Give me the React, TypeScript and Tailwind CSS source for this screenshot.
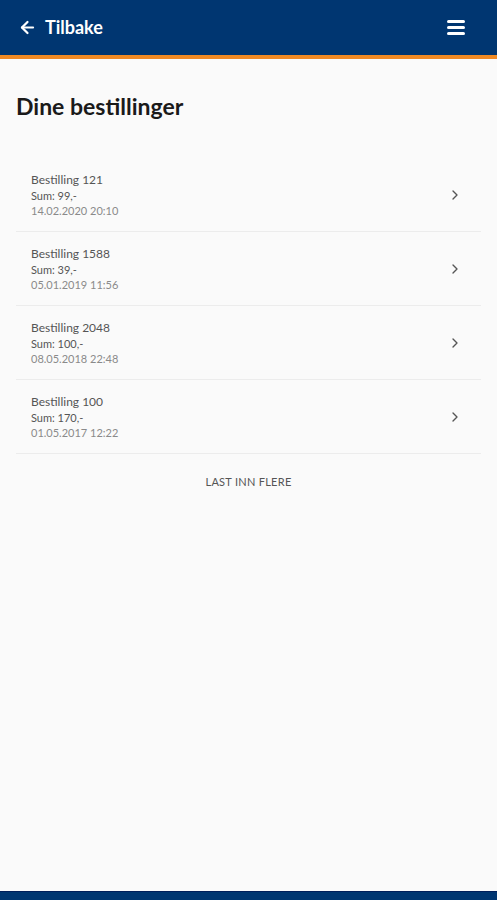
import { ArrowLeft, ChevronRight } from "lucide-react";

const orders = [
	{ id: 121, sum: "99,-", date: "14.02.2020 20:10" },
	{ id: 1588, sum: "39,-", date: "05.01.2019 11:56" },
	{ id: 2048, sum: "100,-", date: "08.05.2018 22:48" },
	{ id: 100, sum: "170,-", date: "01.05.2017 12:22" },
];

function OrderRow({ id, sum, date }: { id: number; sum: string; date: string }) {
	return (
		<div className="flex items-center justify-between h-[74px] pl-[15px] pr-[18px] border-b border-[#ececec]">
			<div className="flex flex-col">
				<span className="text-[12px] leading-[16px] text-[#555]">
					Bestilling {id}
				</span>
				<span className="text-[11px] leading-[15px] text-[#555]">
					Sum: {sum}
				</span>
				<span className="text-[11px] leading-[15px] text-[#8a8a8a]">
					{date}
				</span>
			</div>
			<ChevronRight size={16} strokeWidth={2} className="text-[#555]" />
		</div>
	);
}

export default function App() {
	return (
		<div
			className="w-[497px] h-[900px] flex flex-col bg-[#fafafa]"
			style={{ fontFamily: 'Lato, "Open Sans", sans-serif' }}
		>
			<header className="h-[59px] bg-[#003671] border-b-[4px] border-[#f08a24] flex items-center justify-between pl-[18px] pr-[32px] shrink-0">
				<div className="flex items-center gap-[8px] text-white">
					<ArrowLeft size={19} strokeWidth={2.8} />
					<span className="text-[18px] font-bold">Tilbake</span>
				</div>
				<div className="flex flex-col gap-[3px]">
					<div className="w-[18px] h-[3px] bg-white rounded-sm" />
					<div className="w-[18px] h-[3px] bg-white rounded-sm" />
					<div className="w-[18px] h-[3px] bg-white rounded-sm" />
				</div>
			</header>

			<main className="flex-1 px-[16px]">
				<h1 className="mt-[33px] text-[23px] font-bold text-[#1a1a1a] leading-[28px]">
					Dine bestillinger
				</h1>
				<div className="mt-[38px]">
					{orders.map((o) => (
						<OrderRow key={o.id} {...o} />
					))}
				</div>
				<div className="mt-[20px] text-center text-[11px] text-[#555] tracking-wide">
					LAST INN FLERE
				</div>
			</main>

			<footer className="h-[9px] bg-[#003671] border-t border-[#001f5a] shrink-0" />
		</div>
	);
}
